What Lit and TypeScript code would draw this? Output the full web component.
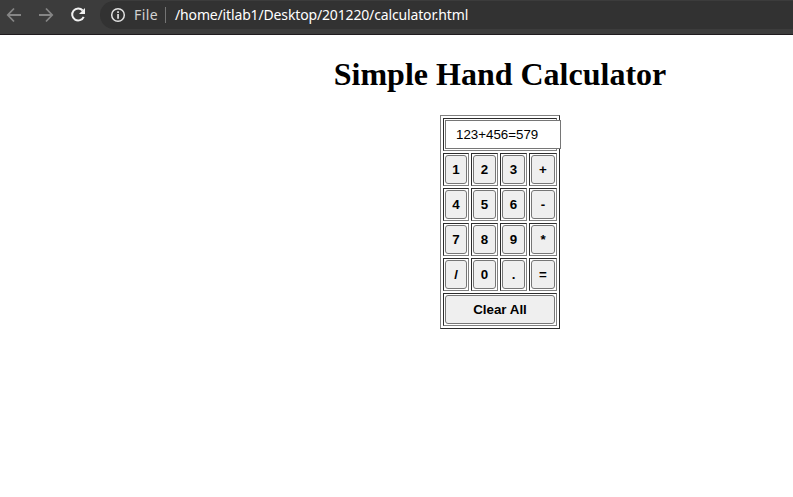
import { LitElement, html, css } from "lit";
import { customElement, state } from "lit/decorators.js";

@customElement("browser-bar")
class BrowserBar extends LitElement {
  static styles = css`
    :host {
      display: flex;
      box-sizing: border-box;
      height: 35px;
      padding-top: 1px;
      background: #3c3c3c;
      border-bottom: 1px solid #1f1b1e;
      font: 14px/28px "Noto Sans", sans-serif;
      color: #fff;
    }
    .nav {
      display: flex;
      width: 100px;
      flex: none;
    }
    svg {
      display: block;
      flex: none;
    }
    .address {
      display: flex;
      flex: 1;
      height: 28px;
      background: #323232;
      border-radius: 14px 0 0 14px;
      white-space: pre;
    }
    .scheme {
      color: #d2d2d2;
      width: 31px;
      margin-left: 3px;
      letter-spacing: 0.45px;
    }
    .divider {
      width: 1px;
      height: 16px;
      margin: 6px 9px 0 0;
      background: #747474;
    }
    .path {
      letter-spacing: -0.15px;
    }
  `;
  render() {
    return html`
      <div class="nav">
        <svg width="100" height="28" fill="none" stroke-width="1.8">
          <path d="M21 14H8M14 7.5L7.8 14L14 20.5M39 14H52M46 7.5L52.2 14L46 20.5" stroke="#858585" />
          <path d="M82.7 9.5A6 6 0 1 0 83.7 15.8" stroke="#f1f1f1" stroke-width="2" />
          <path d="M85 7V13H79Z" fill="#f1f1f1" />
        </svg>
      </div>
      <div class="address">
        <svg width="31" height="28">
          <circle cx="18" cy="14" r="6.3" fill="none" stroke="#e2e2e2" stroke-width="1.5" />
          <path d="M17.2 10.3h1.7v1.7h-1.7zM17.2 13h1.7v4.7h-1.7z" fill="#e2e2e2" />
        </svg>
        <span class="scheme">File</span>
        <span class="divider"></span>
        <span class="path">/home/itlab1/Desktop/201220/calculator.html</span>
      </div>
    `;
  }
}

@customElement("hand-calculator")
class HandCalculator extends LitElement {
  @state() private value = "123+456=579";

  static styles = css`
    :host {
      display: block;
      box-sizing: border-box;
      width: 120px;
      height: 214px;
      padding: 2px;
      border: 1px solid;
      border-color: #808080 #2c2c2c #2c2c2c #808080;
    }
    .grid {
      display: grid;
      grid-template-columns: 26px 27px 27px 28px;
      grid-auto-rows: 33px;
      gap: 2px;
    }
    .cell {
      display: flex;
      box-sizing: border-box;
      min-width: 0;
      padding: 1px;
      border: 1px solid;
      border-color: #2c2c2c #808080 #808080 #2c2c2c;
    }
    .wide {
      grid-column: 1 / -1;
    }
    button {
      flex: 1;
      min-width: 0;
      padding: 0;
      border: 1px solid #767676;
      border-radius: 3px;
      background: #efefef;
      color: #000;
      font: bold 13.333px "Liberation Sans", Arial, sans-serif;
    }
    input {
      flex: none;
      box-sizing: border-box;
      width: 116px;
      height: 29px;
      margin: 0;
      padding: 0 10px;
      border: 1px solid #767676;
      border-radius: 0;
      background: #fff;
      color: #000;
      font: 13.333px "Liberation Sans", Arial, sans-serif;
    }
  `;
  render() {
    const keys = "123+456-789*/0.=".split("");
    return html`
      <div class="grid">
        <div class="cell wide"><input .value=${this.value} /></div>
        ${keys.map((k) => html`<div class="cell"><button>${k}</button></div>`)}
        <div class="cell wide"><button @click=${() => (this.value = "")}>Clear All</button></div>
      </div>
    `;
  }
}

@customElement("app-root")
class AppRoot extends LitElement {
  static styles = css`
    :host {
      display: block;
      height: 497px;
      overflow: hidden;
      background: #fff;
    }
    .page {
      display: flex;
      flex-direction: column;
      align-items: center;
      width: 1000px;
      padding-top: 21px;
    }
    h1 {
      margin: 0 0 22px;
      font: bold 32px/37px "Liberation Serif", "Times New Roman", serif;
      color: #000;
    }
  `;
  render() {
    return html`
      <browser-bar></browser-bar>
      <div class="page">
        <h1>Simple Hand Calculator</h1>
        <hand-calculator></hand-calculator>
      </div>
    `;
  }
}
